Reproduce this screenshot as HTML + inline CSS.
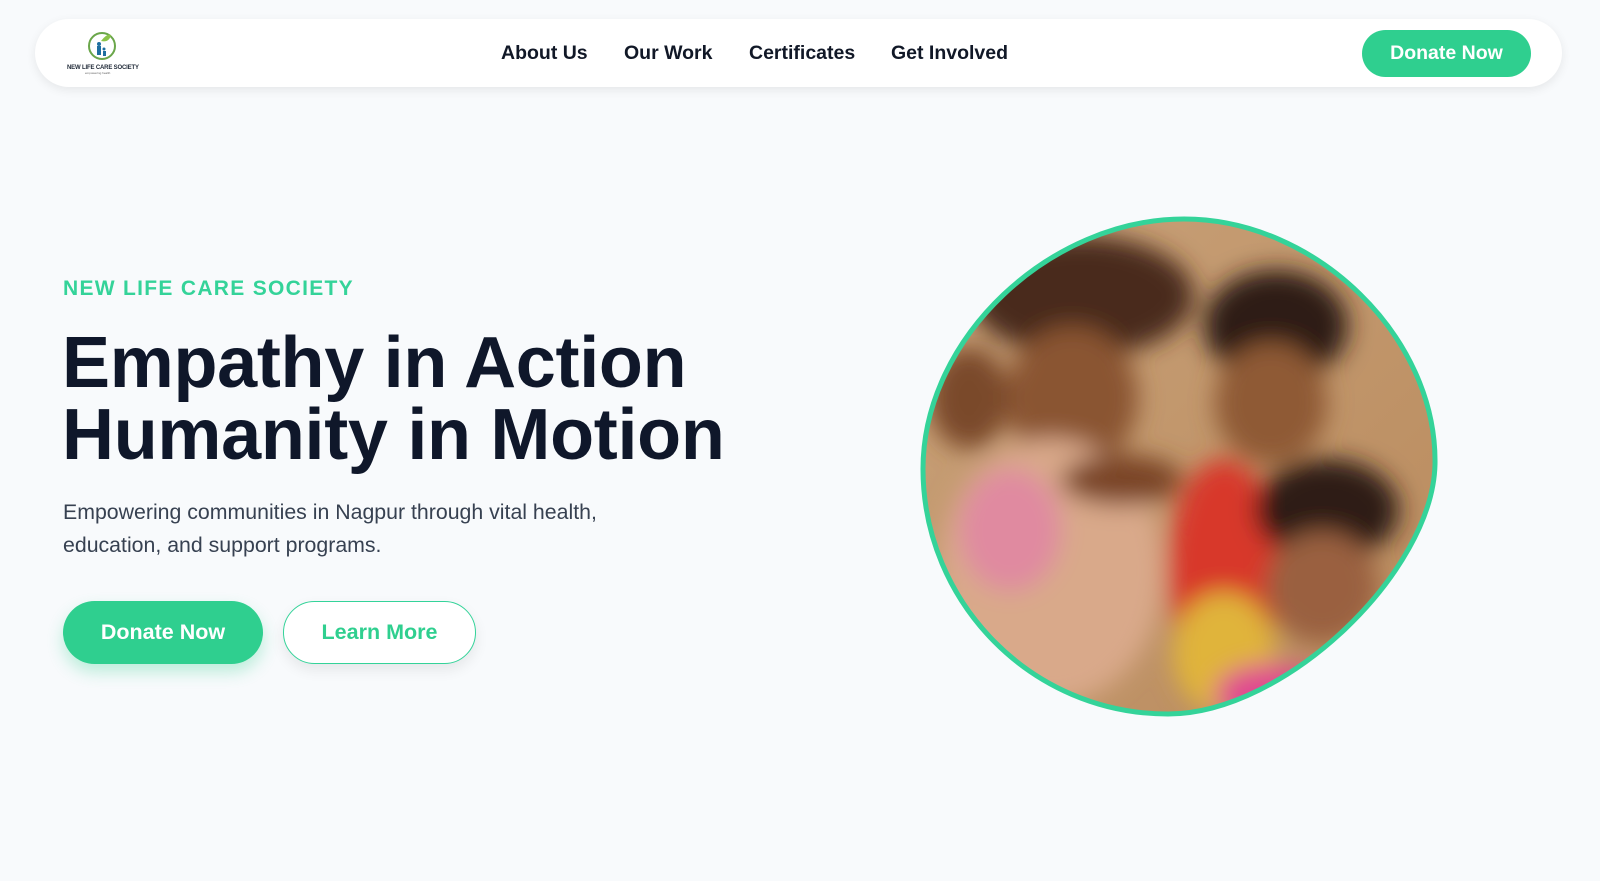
<!DOCTYPE html>
<html><head><meta charset="utf-8"><style>
*{margin:0;padding:0;box-sizing:border-box}
body{width:1600px;height:881px;background:#f8fafc;font-family:"Liberation Sans",sans-serif;position:relative;overflow:hidden}
.nav{position:absolute;left:35px;top:19px;width:1527px;height:68px;background:#fff;border-radius:34px;box-shadow:0 3px 10px rgba(0,0,0,0.08)}
.nav a{position:absolute;top:23px;font-size:19.5px;font-weight:bold;color:#111827;text-decoration:none}
.btn{position:absolute;background:#2fcf8f;color:#fff;font-weight:bold;border-radius:40px;text-align:center}
h1{position:absolute;left:62px;top:327px;font-size:72px;line-height:72px;color:#0f172a;font-weight:bold;letter-spacing:-0.3px}
</style></head><body>
<div class="nav">
 <svg style="position:absolute;left:30px;top:8px" width="80" height="50">
  <circle cx="37" cy="19" r="13" fill="none" stroke="#6aa64a" stroke-width="2"/>
  <path d="M36 14 q6 -8 10 -6 q-2 8 -10 6" fill="#8bc34a"/>
  <circle cx="34" cy="17" r="2" fill="#1e6fa0"/><rect x="32" y="19" width="4" height="9" fill="#1e6fa0"/>
  <circle cx="39" cy="22" r="1.5" fill="#1e6fa0"/><rect x="38" y="24" width="3" height="5" fill="#1e6fa0"/>
  <text x="2" y="42" font-size="6" font-weight="bold" fill="#1f2937" font-family="Liberation Sans" textLength="72">NEW LIFE CARE SOCIETY</text>
  <text x="20" y="47" font-size="3" fill="#666" font-family="Liberation Sans">empowering health</text>
 </svg>
 <a style="left:466px">About Us</a>
 <a style="left:589px">Our Work</a>
 <a style="left:714px">Certificates</a>
 <a style="left:856px">Get Involved</a>
 <div class="btn" style="left:1327px;top:11px;width:169px;height:47px;line-height:47px;font-size:19.5px">Donate Now</div>
</div>
<div style="position:absolute;left:63px;top:277px;font-size:21px;font-weight:bold;color:#34d399;letter-spacing:1.3px">NEW LIFE CARE SOCIETY</div>
<h1>Empathy in Action<br>Humanity in Motion</h1>
<div style="position:absolute;left:63px;top:496px;font-size:21.3px;line-height:33px;color:#374151">Empowering communities in Nagpur through vital health,<br>education, and support programs.</div>
<div class="btn" style="left:63px;top:601px;width:200px;height:63px;line-height:63px;font-size:21.5px;box-shadow:0 8px 16px rgba(47,207,143,0.3)">Donate Now</div>
<div style="position:absolute;left:283px;top:601px;width:193px;height:63px;line-height:61px;border:1.5px solid #34d399;border-radius:40px;background:#fff;color:#2fcf8f;font-weight:bold;font-size:21.5px;text-align:center;box-shadow:0 6px 14px rgba(0,0,0,0.08)">Learn More</div>
<svg style="position:absolute;left:0;top:0" width="1600" height="881">
 <defs>
  <clipPath id="c"><path id="p" d="M1184,219 C1316,219 1437,337 1435,464 C1433,571 1286,714 1168,714 C1031,714 923,602 923,469 C923,337 1051,219 1184,219 Z"/></clipPath>
  <linearGradient id="bg" x1="0" y1="0" x2="1" y2="1"><stop offset="0" stop-color="#c9a27a"/><stop offset="1" stop-color="#b98a5c"/></linearGradient>
  <filter id="b"><feGaussianBlur stdDeviation="12"/></filter>
 </defs>
 <g clip-path="url(#c)">
  <rect x="915" y="210" width="530" height="510" fill="url(#bg)"/>
  <g filter="url(#b)">
   <ellipse cx="1082" cy="296" rx="112" ry="60" fill="#4a2c1a"/>
   <ellipse cx="1276" cy="326" rx="72" ry="56" fill="#2e1c12"/>
   <ellipse cx="1072" cy="398" rx="66" ry="72" fill="#8a5532"/>
   <ellipse cx="1271" cy="403" rx="56" ry="61" fill="#8f5a36"/>
   <ellipse cx="969" cy="398" rx="40" ry="51" fill="#7a4a2c"/>
   <ellipse cx="1051" cy="571" rx="112" ry="133" fill="#d9a98a"/>
   <ellipse cx="1010" cy="530" rx="51" ry="61" fill="#e08aa0"/>
   <ellipse cx="1224" cy="571" rx="56" ry="112" fill="#d8372a"/>
   <ellipse cx="1224" cy="653" rx="51" ry="61" fill="#e0b43a"/>
   <ellipse cx="1327" cy="510" rx="72" ry="51" fill="#2e1c12"/>
   <ellipse cx="1322" cy="587" rx="56" ry="56" fill="#9a6040"/>
   <ellipse cx="1271" cy="694" rx="56" ry="30" fill="#e04a90"/>
   <ellipse cx="1122" cy="480" rx="61" ry="25" fill="#7a4526"/>
  </g>
 </g>
 <use href="#p" fill="none" stroke="#34d399" stroke-width="5"/>
</svg>
</body></html>
